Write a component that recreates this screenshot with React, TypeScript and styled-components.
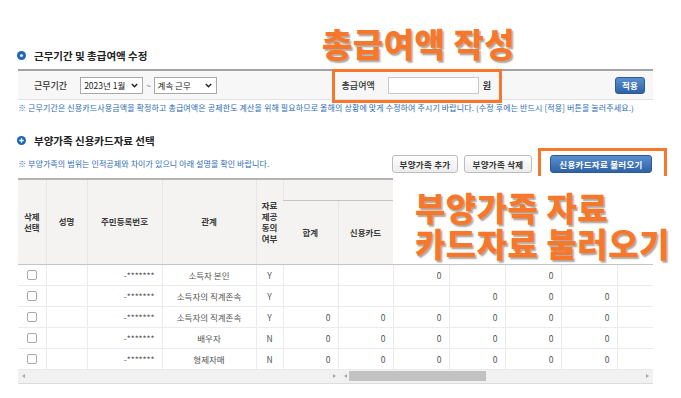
import styled, { createGlobalStyle } from "styled-components";
import { FC } from "react";

const FONT = `"Noto Sans CJK KR", "Noto Sans", sans-serif`;
const ORANGE = "#f7772b";
const BLUE_TEXT = "#2b6cb3";

const GlobalStyle = createGlobalStyle`
  html, body {
    margin: 0;
    padding: 0;
    background: #ffffff;
  }
  body {
    font-family: ${FONT};
    color: #333;
  }
  * { box-sizing: border-box; }
`;

const Page = styled.div`
  position: relative;
  width: 681px;
  height: 398px;
  padding: 47px 28px 0 18px;
  overflow: hidden;
`;

const SectionTitle = styled.h2<{ gap?: number }>`
  display: flex;
  align-items: center;
  gap: 8px;
  margin: ${(p) => p.gap ?? 0}px 0 0 -1px;
  height: 16px;
  font-size: 10.5px;
  font-weight: 700;
  color: #222;
  letter-spacing: 0;
`;

const FilterBar = styled.div`
  display: flex;
  align-items: center;
  margin-top: 6px;
  height: 31px;
  padding: 0 8px 0 16px;
  background: #f7f7f7;
  border-top: 2px solid #a3a3a3;
  border-bottom: 1px solid #e2e2e2;
`;

const Label = styled.span`
  font-size: 9px;
  color: #333;
  font-weight: 500;
  white-space: nowrap;
`;

const SelectBox = styled.div<{ w: number }>`
  display: flex;
  align-items: center;
  justify-content: space-between;
  width: ${(p) => p.w}px;
  height: 17px;
  padding: 0 4px 0 3px;
  background: #fff;
  border: 1px solid #a9a9a9;
  font-size: 8.5px;
  color: #222;
  white-space: nowrap;
`;

const Tilde = styled.span`
  font-size: 8px;
  color: #666;
  margin: 0 3px 0 3px;
`;

const Highlight = styled.div<{ l: number; r: number; t: number; b: number }>`
  position: relative;
  display: flex;
  align-items: center;
  &::after {
    content: "";
    position: absolute;
    left: ${(p) => -p.l}px;
    right: ${(p) => -p.r}px;
    top: ${(p) => -p.t}px;
    bottom: ${(p) => -p.b}px;
    border: 3px solid ${ORANGE};
    pointer-events: none;
  }
`;

const PayGroup = styled(Highlight)`
  margin-left: 125px;
`;

const TextInput = styled.div`
  width: 91px;
  height: 17px;
  margin-left: 13px;
  background: #fff;
  border: 1px solid #c9c9c9;
`;

const Won = styled.span`
  margin-left: 4px;
  font-size: 9px;
  font-weight: 700;
  color: #333;
`;

const BlueButton = styled.button<{ w: number; h: number }>`
  width: ${(p) => p.w}px;
  height: ${(p) => p.h}px;
  padding: 0;
  border: 1px solid #2b5a94;
  border-radius: 3px;
  background: linear-gradient(#5a8fcf, #2f62a5);
  color: #fff;
  font-family: ${FONT};
  font-size: 8.5px;
  font-weight: 700;
  letter-spacing: 0.3px;
  white-space: nowrap;
`;

const ApplyButton = styled(BlueButton)`
  margin-left: auto;
`;

const Note = styled.p<{ mt?: number; spacing?: number }>`
  margin: ${(p) => p.mt ?? 0}px 0 0;
  font-size: 8px;
  line-height: 12px;
  letter-spacing: ${(p) => p.spacing ?? 0}px;
  color: ${BLUE_TEXT};
  white-space: nowrap;
`;

const ActionRow = styled.div`
  display: flex;
  align-items: center;
  margin-top: 7px;
  height: 18px;
`;

const ButtonGroup = styled.div`
  display: flex;
  align-items: center;
  margin-left: auto;
  margin-right: 1px;
  gap: 6px;
`;

const GrayButton = styled.button<{ w: number }>`
  width: ${(p) => p.w}px;
  height: 18px;
  padding: 0;
  border: 1px solid #bdbdbd;
  border-radius: 3px;
  background: linear-gradient(#ffffff, #ececec);
  color: #333;
  font-family: ${FONT};
  font-size: 8.5px;
  font-weight: 700;
  letter-spacing: 0.3px;
  white-space: nowrap;
`;

const LoadWrap = styled(Highlight)`
  margin-left: 12px;
`;

const TableWrap = styled.div`
  margin-top: 5px;
  width: 635px;
  overflow: hidden;
`;

const Table = styled.table`
  width: 655px;
  table-layout: fixed;
  border-collapse: collapse;
`;

const Th = styled.th<{ top?: boolean }>`
  padding: 0;
  background: #f4f3f1;
  border-left: 1px solid #e7e6e4;
  border-top: ${(p) => (p.top ? "2px solid #b3b3b3" : "1px solid #cfcfcf")};
  border-bottom: 1px solid #c4c4c4;
  font-size: 8.5px;
  line-height: 11px;
  font-weight: 700;
  color: #3b3b3b;
  text-align: center;
  vertical-align: middle;
  &:first-child { border-left: none; }
`;

const Td = styled.td<{ align?: "left" | "center" | "right" }>`
  height: 21px;
  padding: 0 7px;
  border-left: 1px solid #ebebeb;
  border-bottom: 1px solid #ebebeb;
  font-size: 8.5px;
  color: #555;
  text-align: ${(p) => p.align ?? "center"};
  white-space: nowrap;
  &:first-child { border-left: none; }
`;

const CheckBox = styled.span`
  display: inline-block;
  width: 10px;
  height: 10px;
  margin-top: 2px;
  border: 1px solid #a9a9a9;
  border-radius: 2px;
  background: #fff;
`;

const ScrollBar = styled.div`
  display: flex;
  width: 635px;
  height: 14px;
  background: #f1f1f1;
  border-bottom: 1px solid #dcdcdc;
`;

const Track = styled.div<{ w?: number }>`
  display: flex;
  align-items: center;
  ${(p) => (p.w ? `width: ${p.w}px;` : "flex: 1;")}
  padding: 0 4px;
`;

const Arrow = styled.span<{ dir: "left" | "right" }>`
  width: 0;
  height: 0;
  border-top: 2.5px solid transparent;
  border-bottom: 2.5px solid transparent;
  ${(p) =>
    p.dir === "left"
      ? "border-right: 3px solid #a8a8a8;"
      : "border-left: 3px solid #a8a8a8;"}
`;

const Spacer = styled.div`
  flex: 1;
`;

const Thumb = styled.div`
  width: 137px;
  height: 10px;
  margin-left: 2px;
  background: #c2c2c2;
`;

const Annotation = styled.div<{ x: number; y: number }>`
  position: absolute;
  left: ${(p) => p.x}px;
  top: ${(p) => p.y}px;
  font-family: ${FONT};
  font-size: 33px;
  line-height: 36px;
  font-weight: 900;
  letter-spacing: 0.5px;
  color: ${ORANGE};
  text-shadow: 1.5px 1.5px 1.5px rgba(80, 60, 40, 0.45);
  white-space: nowrap;
`;

const TableNote = styled(Annotation)`
  width: 288px;
  height: 88px;
  padding: 13px 0 0 22px;
  background: #fff;
`;

const NoteLine = styled.div`
  height: 36px;
`;

const Bullet: FC<{ plus?: boolean }> = ({ plus }) => (
  <svg width="9" height="9" viewBox="0 0 9 9">
    <circle cx="4.5" cy="4.5" r="4.5" fill="#1f67b5" />
    {plus ? (
      <path d="M4.5 2.3v4.4M2.3 4.5h4.4" stroke="#fff" strokeWidth="1.3" />
    ) : (
      <circle cx="4.5" cy="4.5" r="1.6" fill="#d9e8f7" />
    )}
  </svg>
);

const Chevron = () => (
  <svg width="7" height="5" viewBox="0 0 7 5">
    <path d="M0.8 0.9L3.5 3.8L6.2 0.9" stroke="#222" strokeWidth="1.4" fill="none" />
  </svg>
);

interface IRow {
  relation: string;
  agree: "Y" | "N";
  values: (number | null)[];
}

const ROWS: IRow[] = [
  { relation: "소득자 본인", agree: "Y", values: [null, null, 0, null, 0, null, null] },
  { relation: "소득자의 직계존속", agree: "Y", values: [null, null, null, 0, 0, 0, null] },
  { relation: "소득자의 직계존속", agree: "Y", values: [0, 0, 0, 0, 0, 0, null] },
  { relation: "배우자", agree: "N", values: [0, 0, 0, 0, 0, 0, null] },
  { relation: "형제자매", agree: "N", values: [0, 0, 0, 0, 0, 0, null] },
];

const COLS = [28, 41, 75, 94, 27, 55, 55, 56, 56, 56, 56, 56];

export default function App() {
  return (
    <Page>
      <GlobalStyle />
      <SectionTitle>
        <Bullet />
        근무기간 및 총급여액 수정
      </SectionTitle>

      <FilterBar>
        <Label>근무기간</Label>
        <SelectBox w={63} style={{ marginLeft: 13 }}>
          2023년 1월 <Chevron />
        </SelectBox>
        <Tilde>~</Tilde>
        <SelectBox w={63}>
          계속 근무 <Chevron />
        </SelectBox>
        <PayGroup l={10} r={11} t={8} b={9}>
          <Label>총급여액</Label>
          <TextInput />
          <Won>원</Won>
        </PayGroup>
        <ApplyButton w={30} h={17}>적용</ApplyButton>
      </FilterBar>

      <Note mt={2} spacing={0.12}>
        ※ 근무기간은 신용카드사용금액을 확정하고 총급여액은 공제한도 계산을 위해 필요하므로 올해의 상황에 맞게 수정하여 주시기 바랍니다. (수정 후에는 반드시 [적용] 버튼을 눌러주세요.)
      </Note>

      <SectionTitle gap={18}>
        <Bullet plus />
        부양가족 신용카드자료 선택
      </SectionTitle>

      <ActionRow>
        <Note spacing={0.1}>※ 부양가족의 범위는 인적공제와 차이가 있으니 아래 설명을 확인 바랍니다.</Note>
        <ButtonGroup>
          <GrayButton w={66}>부양가족 추가</GrayButton>
          <GrayButton w={68}>부양가족 삭제</GrayButton>
          <LoadWrap l={12} r={15} t={7} b={7}>
            <BlueButton w={102} h={18}>신용카드자료 불러오기</BlueButton>
          </LoadWrap>
        </ButtonGroup>
      </ActionRow>

      <TableWrap>
        <Table>
          <colgroup>
            {COLS.map((w, i) => (
              <col key={i} style={{ width: w }} />
            ))}
          </colgroup>
          <thead>
            <tr style={{ height: 21 }}>
              <Th top rowSpan={2}>삭제<br />선택</Th>
              <Th top rowSpan={2}>성명</Th>
              <Th top rowSpan={2}>주민등록번호</Th>
              <Th top rowSpan={2}>관계</Th>
              <Th top rowSpan={2}>자료<br />제공<br />동의<br />여부</Th>
              <Th top colSpan={7} />
            </tr>
            <tr style={{ height: 64 }}>
              <Th>합계</Th>
              <Th>신용카드</Th>
              <Th />
              <Th />
              <Th />
              <Th />
              <Th />
            </tr>
          </thead>
          <tbody>
            {ROWS.map((row, i) => (
              <tr key={i}>
                <Td><CheckBox /></Td>
                <Td />
                <Td align="right">-*******</Td>
                <Td>{row.relation}</Td>
                <Td>{row.agree}</Td>
                {row.values.map((v, j) => (
                  <Td key={j} align="right">{v ?? ""}</Td>
                ))}
              </tr>
            ))}
          </tbody>
        </Table>
      </TableWrap>
      <ScrollBar>
        <Track w={322}>
          <Arrow dir="left" />
          <Spacer />
          <Arrow dir="right" />
        </Track>
        <Track>
          <Arrow dir="left" />
          <Thumb />
          <Spacer />
          <Arrow dir="right" />
        </Track>
      </ScrollBar>

      <Annotation x={322} y={25}>총급여액 작성</Annotation>
      <TableNote x={393} y={176}>
        <NoteLine>부양가족 자료</NoteLine>
        <NoteLine>카드자료 불러오기</NoteLine>
      </TableNote>
    </Page>
  );
}
